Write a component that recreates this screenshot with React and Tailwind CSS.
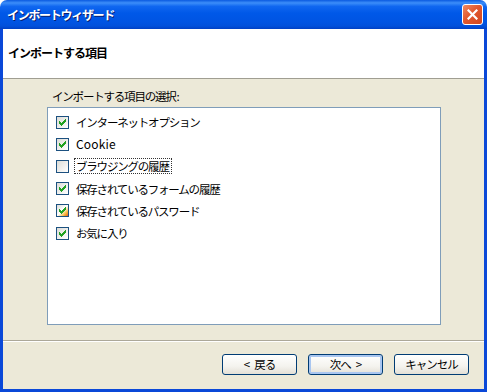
import React from "react";

const jp = "font-['Noto_Sans_CJK_JP','Noto_Sans',sans-serif]";

function CheckMark() {
  return (
    <svg width="7" height="7" viewBox="0 0 7 7" shapeRendering="crispEdges">
      <path
        d="M6 0h1v1h-1z M5 1h2v1h-2z M0 2h1v1h-1z M4 2h3v1h-3z M0 3h2v1h-2z M3 3h3v1h-3z M0 4h5v1h-5z M1 5h3v1h-3z M2 6h1v1h-1z"
        fill="#21A121"
      />
    </svg>
  );
}

function Row({ checked, hover, focus, latin, label }) {
  return (
    <div className="flex items-center h-[22.2px] pl-[8px]">
      <span
        className={
          "w-[13px] h-[13px] border border-[#1C5180] shrink-0 flex items-center justify-center " +
          (hover
            ? "bg-[linear-gradient(135deg,#DCDCD7_0%,#FFFFFF_50%,#F8B330_80%,#E0552D_100%)]"
            : "bg-[linear-gradient(135deg,#DCDCD7_0%,#FFFFFF_100%)]")
        }
      >
        {checked && <CheckMark />}
      </span>
      <span
        className={
          "ml-[5px] leading-[14px] text-black pl-[1px] pr-[2px] " +
          (latin ? "text-[12px] tracking-[0.2px] " : "text-[11.5px] tracking-[-1.2px] ") +
          (focus ? "border border-dotted border-[#333]" : "border border-transparent")
        }
      >
        {label}
      </span>
    </div>
  );
}

function Btn({ children, def }) {
  return (
    <button
      className={
        "w-[75px] h-[21px] rounded-[3px] border border-[#003C74] text-[11.5px] tracking-[-1px] leading-none text-black flex items-center justify-center bg-[linear-gradient(to_bottom,#FFFFFF_0%,#F4F3EE_60%,#E3E0D6_100%)] " +
        (def ? "shadow-[inset_0_0_0_2px_#A9C6F0]" : "")
      }
    >
      {children}
    </button>
  );
}

export default function App() {
  return (
    <div className={"w-[487px] h-[392px] flex flex-col bg-white " + jp}>
      {/* Title bar */}
      <div className="h-[29px] shrink-0 rounded-t-[7px] flex items-center justify-between pl-[7px] pr-[4px] bg-[linear-gradient(to_bottom,#0A5AE0_0%,#3C8EF9_10%,#1067F0_22%,#0058E8_45%,#0054E3_75%,#0150DB_90%,#0040C4_100%)]">
        <span className="text-white font-bold text-[12px] tracking-[-1.3px] leading-none [text-shadow:1px_1px_0_#0A1E6E]">
          インポートウィザード
        </span>
        <div className="w-[21px] h-[21px] rounded-[3px] border border-white flex items-center justify-center bg-[linear-gradient(135deg,#F08A62_0%,#E2582E_45%,#D0461F_100%)]">
          <svg width="11" height="11" viewBox="0 0 11 11">
            <path d="M1.5 1.5L9.5 9.5M9.5 1.5L1.5 9.5" stroke="white" strokeWidth="2.2" strokeLinecap="square" />
          </svg>
        </div>
      </div>

      {/* Body with frame */}
      <div className="flex-1 flex flex-col border-x-[3px] border-b-[3px] border-[#0A48D8]">
        {/* Header */}
        <div className="h-[50px] shrink-0 bg-white border-b border-[#A09E92] pl-[5px] pt-[10px]">
          <span className="font-bold text-[12px] tracking-[-1px] leading-[14px] text-black">インポートする項目</span>
        </div>

        {/* Content */}
        <div className="flex-1 bg-[#ECE9D8] flex flex-col">
          <div className="pl-[49px] pt-[10px] h-[24px] text-[11.5px] tracking-[-1.2px] leading-[14px] text-black">
            インポートする項目の選択<span className="tracking-normal ml-[1px]">:</span>
          </div>
          <div className="ml-[44px] mt-[4px] w-[394px] h-[218px] bg-white border border-[#7F9DB9] pt-[3px]">
            <Row checked label="インターネットオプション" />
            <Row checked latin label="Cookie" />
            <Row focus label="ブラウジングの履歴" />
            <Row checked label="保存されているフォームの履歴" />
            <Row checked hover label="保存されているパスワード" />
            <Row checked label="お気に入り" />
          </div>

          <div className="mt-[15px] h-[2px] border-t border-[#ACA899] border-b border-b-white" />

          <div className="mt-[12px] flex justify-end gap-[11px] pr-[15px]">
            <Btn>
              <span className="mr-[5px]">&lt;</span>戻る
            </Btn>
            <Btn def>
              次へ<span className="ml-[5px]">&gt;</span>
            </Btn>
            <Btn>キャンセル</Btn>
          </div>
        </div>
      </div>
    </div>
  );
}
